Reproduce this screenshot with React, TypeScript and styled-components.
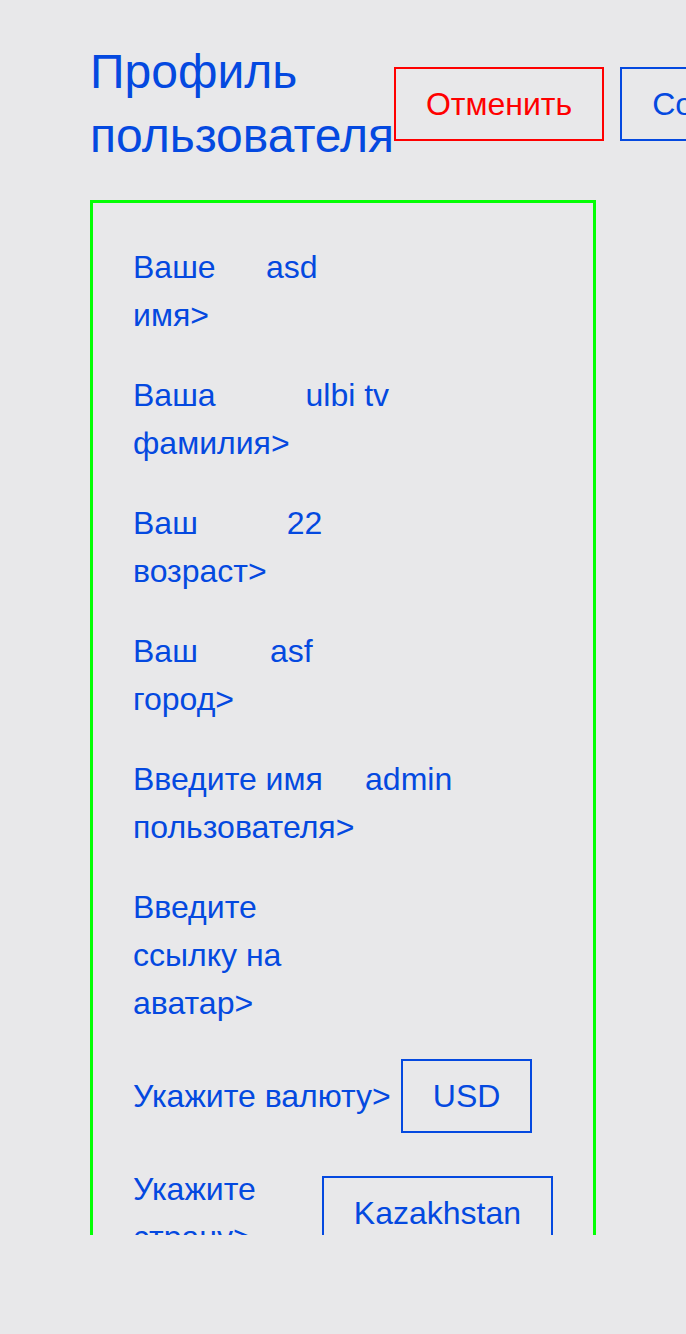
import React from "react";
import styled, { createGlobalStyle } from "styled-components";

const BG = "#e8e8ea";
const BLUE = "#0449e0";
const RED = "#ff0000";
const GREEN = "#04ff04";

const GlobalStyle = createGlobalStyle`
  html, body {
    margin: 0;
    padding: 0;
    background: ${BG};
  }
  body {
    font-family: "Liberation Sans", Arial, sans-serif;
    color: ${BLUE};
  }
  * { box-sizing: border-box; }
`;

const Page = styled.main`
  height: 1235px;
  overflow: hidden;
  padding: 40px 90px 0;
  background: ${BG};
`;

const Header = styled.header`
  display: flex;
  align-items: center;
  margin-bottom: 32px;
`;

const Title = styled.h1`
  margin: 0;
  font-size: 48px;
  line-height: 64px;
  font-weight: 400;
  color: ${BLUE};
  flex: 0 1 auto;
`;

const Actions = styled.div`
  display: flex;
  gap: 16px;
  flex-shrink: 0;
`;

const Button = styled.button<{ $variant?: "outline" | "outlineRed" }>`
  flex-shrink: 0;
  margin: 0;
  padding: 15px 30px;
  background: transparent;
  border: 2px solid ${(p) => (p.$variant === "outlineRed" ? RED : BLUE)};
  color: ${(p) => (p.$variant === "outlineRed" ? RED : BLUE)};
  font-family: inherit;
  font-size: 32px;
  line-height: 40px;
  white-space: nowrap;
  cursor: pointer;
`;

const Card = styled.section`
  border: 3px solid ${GREEN};
  padding: 40px;
  display: flex;
  flex-direction: column;
  gap: 32px;
  font-size: 32px;
  line-height: 48px;
`;

const InputRow = styled.label`
  display: flex;
  align-items: flex-start;
`;

const Placeholder = styled.span`
  flex: 0 1 auto;
  margin-right: 5px;
`;

const Field = styled.input`
  flex: 0 1.13 391px;
  width: 391px;
  min-width: 0;
  height: 48px;
  padding: 0;
  margin: 0;
  border: none;
  outline: none;
  background: transparent;
  color: ${BLUE};
  font-family: inherit;
  font-size: 32px;
  line-height: 48px;
`;

const SelectRow = styled.div`
  display: flex;
  align-items: center;
  gap: 10px;
`;

const SelectLabel = styled.span`
  flex: 0 1 auto;
`;

interface InputProps {
  placeholder: string;
  value: string;
}

function Input({ placeholder, value }: InputProps) {
  return (
    <InputRow>
      <Placeholder>{`${placeholder}>`}</Placeholder>
      <Field value={value} readOnly />
    </InputRow>
  );
}

function ListBox({ label, value }: { label: string; value: string }) {
  return (
    <SelectRow>
      <SelectLabel>{`${label}>`}</SelectLabel>
      <Button type="button">{value}</Button>
    </SelectRow>
  );
}

const fields: InputProps[] = [
  { placeholder: "Ваше имя", value: "asd" },
  { placeholder: "Ваша фамилия", value: "ulbi tv" },
  { placeholder: "Ваш возраст", value: "22" },
  { placeholder: "Ваш город", value: "asf" },
  { placeholder: "Введите имя пользователя", value: "admin" },
  { placeholder: "Введите ссылку на аватар", value: "" },
];

export default function App() {
  return (
    <>
      <GlobalStyle />
      <Page>
        <Header>
          <Title>Профиль пользователя</Title>
          <Actions>
            <Button type="button" $variant="outlineRed">Отменить</Button>
            <Button type="button">Сохранить</Button>
          </Actions>
        </Header>
        <Card>
          {fields.map((f) => (
            <Input key={f.placeholder} placeholder={f.placeholder} value={f.value} />
          ))}
          <ListBox label="Укажите валюту" value="USD" />
          <ListBox label="Укажите страну" value="Kazakhstan" />
        </Card>
      </Page>
    </>
  );
}
